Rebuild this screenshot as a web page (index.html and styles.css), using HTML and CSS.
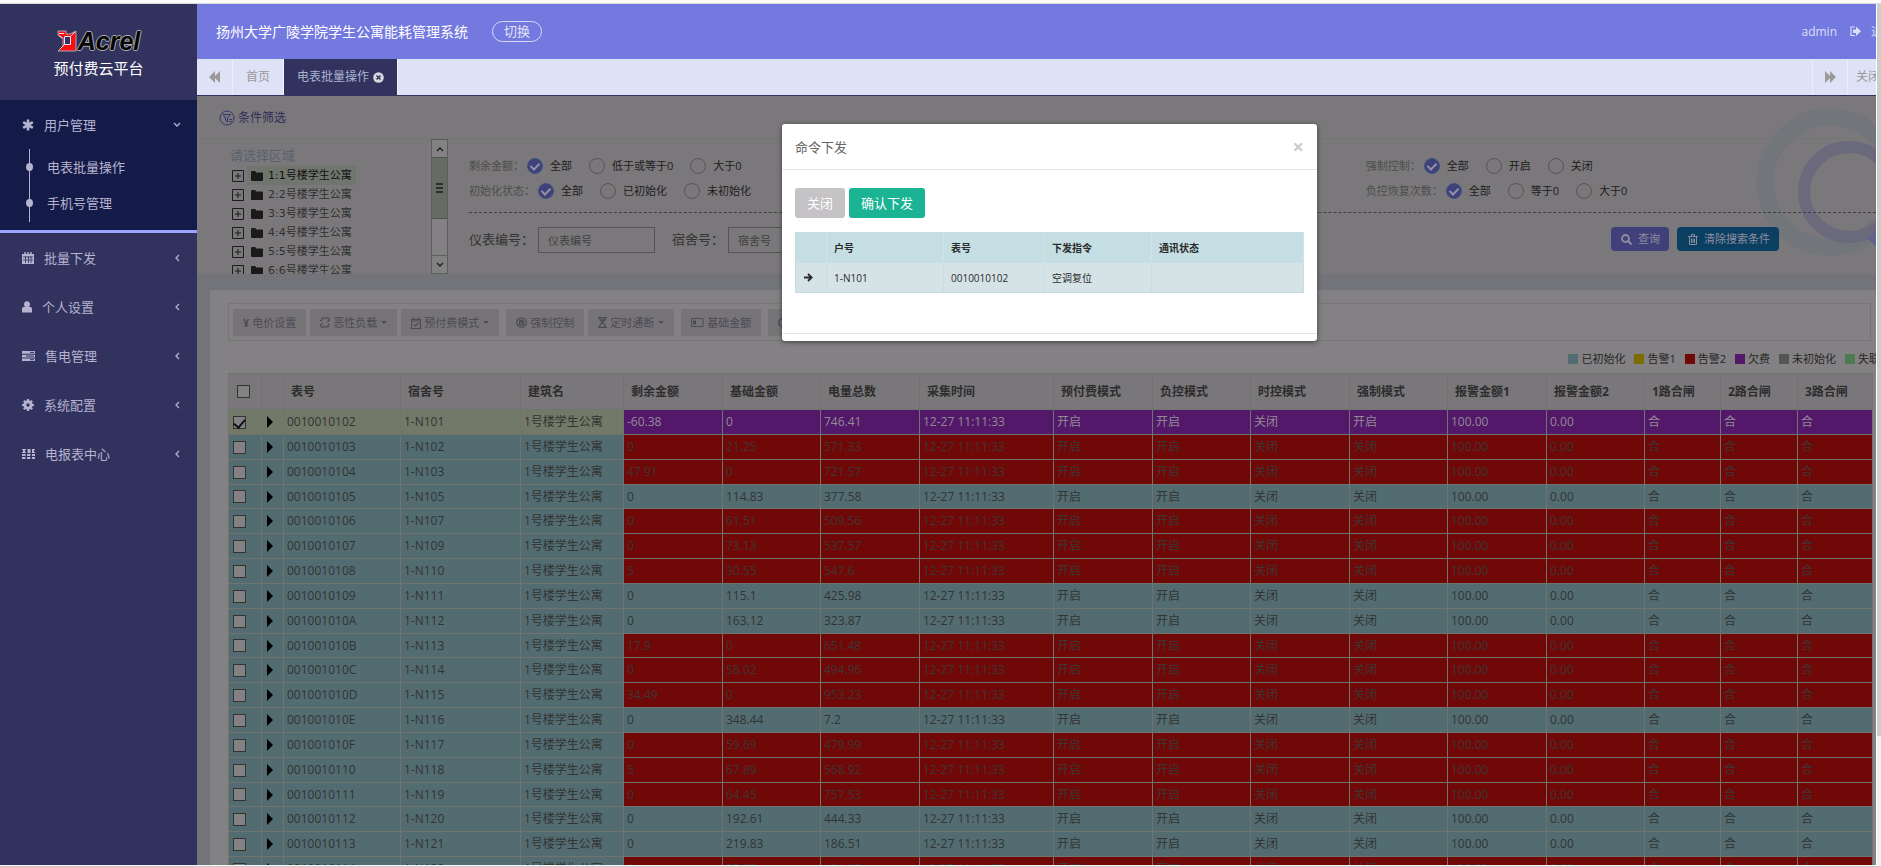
FILE: index.html
```html
<!DOCTYPE html>
<html lang="zh-CN">
<head>
<meta charset="utf-8">
<title>预付费云平台</title>
<link rel="stylesheet" href="styles.css">
</head>
<body>
<div class="strip"></div>
<div class="app">
  <aside class="sidebar">
    <div class="brand">
      <div class="logo">
        <svg width="20" height="22" viewBox="0 0 20 22"><path d="M1 1h8v3h4l6-3v20H1l5-5V8L1 5z" fill="#f81010" stroke="#aaa6b4"/><path d="M2 3.500h5M1.500 5.500l4 3" stroke="#e6e1ee" fill="none"/><path d="M7.500 6.500h6v8h-6z" fill="#32325f" stroke="#e6e1ee"/><path d="M13.500 6.500L18 2M7.500 14.500L3 19" stroke="#e6e1ee"/></svg>
        <span class="logo-text">Acrel</span>
      </div>
      <div class="brand-name">预付费云平台</div>
    </div>
    <nav>
      <div class="group open">
        <a class="item" href="#">
          <svg class="ico" viewBox="0 0 12 12"><path d="M6 .5v11M1.200 3.200l9.600 5.600M10.800 3.200l-9.600 5.600" stroke="currentColor" stroke-width="2.600"/></svg>
          <span>用户管理</span>
          <svg class="arrow" viewBox="0 0 8 8"><path d="M1 2l3 3 3-3" stroke="currentColor" stroke-width="1.300" fill="none"/></svg>
        </a>
        <ul class="sub">
          <li><a href="#">电表批量操作</a></li>
          <li><a href="#">手机号管理</a></li>
        </ul>
      </div>
      <a class="item" href="#">
        <svg class="ico" viewBox="0 0 12 12"><path d="M0 2h12v10H0z" fill="currentColor"/><path d="M3 0v3M6 0v3M9 0v3" stroke="currentColor" stroke-width="1.500"/><path d="M1 5h10M1 8h10M3.500 4v7M6.500 4v7M9 4v7" stroke="#32325f" stroke-width=".8"/></svg>
        <span>批量下发</span>
        <svg class="arrow" viewBox="0 0 8 8"><path d="M6 1L3 4l3 3" stroke="currentColor" stroke-width="1.300" fill="none"/></svg>
      </a>
      <a class="item" href="#">
        <svg class="ico narrow" viewBox="0 0 10 12"><circle cx="5" cy="3.200" r="2.900" fill="currentColor"/><path d="M0 11.500V8c0-2 2-2.500 3-2h4c1-.5 3 0 3 2v3.500z" fill="currentColor"/></svg>
        <span>个人设置</span>
        <svg class="arrow" viewBox="0 0 8 8"><path d="M6 1L3 4l3 3" stroke="currentColor" stroke-width="1.300" fill="none"/></svg>
      </a>
      <a class="item" href="#">
        <svg class="ico wide" viewBox="0 0 13 12"><path d="M0 1h13v2.800H0zM0 4.800h13v2.600H0zM0 8.400h13V11H0z" fill="currentColor"/><path d="M8 2.400h4M4 6.100h8M8 9.700h4" stroke="#32325f"/></svg>
        <span>售电管理</span>
        <svg class="arrow" viewBox="0 0 8 8"><path d="M6 1L3 4l3 3" stroke="currentColor" stroke-width="1.300" fill="none"/></svg>
      </a>
      <a class="item" href="#">
        <svg class="ico" viewBox="0 0 12 12"><circle cx="6" cy="6" r="3.200" fill="none" stroke="currentColor" stroke-width="3"/><path d="M6 0v2M6 10v2M0 6h2M10 6h2M1.800 1.800l1.500 1.500M8.700 8.700l1.500 1.500M1.800 10.200l1.500-1.500M8.700 3.300l1.500-1.500" stroke="currentColor" stroke-width="2.200"/></svg>
        <span>系统配置</span>
        <svg class="arrow" viewBox="0 0 8 8"><path d="M6 1L3 4l3 3" stroke="currentColor" stroke-width="1.300" fill="none"/></svg>
      </a>
      <a class="item" href="#">
        <svg class="ico wide" viewBox="0 0 13 12"><path d="M0 1h4v1H3v2h1v1H0V4h1V2H0zM5.500 1h3v4h-3zM10 1h3v1h-1v2h1v1h-3zM0 6h3.500v2H0zM5 6h3.500v2H5zM10 6h3v2h-3zM0 9h3.500v2H0zM5 9h3.500v2H5zM10 9h3v2h-3z" fill="currentColor"/></svg>
        <span>电报表中心</span>
        <svg class="arrow" viewBox="0 0 8 8"><path d="M6 1L3 4l3 3" stroke="currentColor" stroke-width="1.300" fill="none"/></svg>
      </a>
    </nav>
  </aside>

  <div class="main">
    <header class="topbar">
      <h1>扬州大学广陵学院学生公寓能耗管理系统</h1>
      <button class="switch" type="button">切换</button>
      <span class="user">admin</span>
      <a class="logout" href="#"><svg width="11" height="11" viewBox="0 0 11 11"><path d="M5 1H1v8.500h4" fill="none" stroke="currentColor" stroke-width="1.200"/><path d="M3 3.500h3V.5l5 4.800-5 4.700V7H3z" fill="currentColor"/></svg><span>退出</span></a>
    </header>
    <div class="tabs">
      <button class="tab-nav" type="button" aria-label="向左"><svg width="12" height="12" viewBox="0 0 12 12"><path d="M6 0v12L0 6zM11 0v12L5 6z" fill="currentColor"/></svg></button>
      <a class="tab" href="#">首页</a>
      <a class="tab active" href="#">电表批量操作<svg width="11" height="11" viewBox="0 0 11 11"><circle cx="5.500" cy="5.500" r="5.300" fill="#d8d8dc"/><path d="M3.500 3.500l4 4M7.500 3.500l-4 4" stroke="#32325f" stroke-width="1.500"/></svg></a>
      <button class="tab-nav right" type="button" aria-label="向右"><svg width="12" height="12" viewBox="0 0 12 12"><path d="M1 0v12l6-6zM6 0v12l6-6z" fill="currentColor"/></svg></button>
      <button class="tab-close" type="button">关闭</button>
    </div>

    <div class="content">
      <section class="filter">
        <svg class="deco" width="130" height="150" viewBox="0 0 130 150"><circle cx="75" cy="74" r="65" fill="none" stroke="#72757a" stroke-width="17"/><circle cx="94" cy="84" r="45" fill="none" stroke="#6b697c" stroke-width="12"/><path d="M112 130l12-8v20z" fill="#62638a"/></svg>
        <div class="filter-head">
          <svg width="16" height="16" viewBox="0 0 16 16" fill="none" stroke="currentColor"><circle cx="8" cy="8" r="7"/><path d="M4 4.500h7.500L8.500 8v4l-2-1.500V8zM10 9.500h3M10 11.500h2.500"/></svg>
          <span>条件筛选</span>
        </div>
        <div class="filter-body">
          <div class="area">
            <div class="tree">
              <div class="tree-title">请选择区域</div>
              <ul id="tree"></ul>
            </div>
            <div class="scroll">
              <button type="button" aria-label="上"><svg width="8" height="8" viewBox="0 0 8 8"><path d="M1 6l3-3 3 3" stroke="currentColor" stroke-width="1.500" fill="none"/></svg></button>
              <div class="thumb"><i></i><i></i><i></i></div>
              <div class="track"></div>
              <button type="button" aria-label="下"><svg width="8" height="8" viewBox="0 0 8 8"><path d="M1 2l3 3 3-3" stroke="currentColor" stroke-width="1.500" fill="none"/></svg></button>
            </div>
          </div>
          <form class="form">
            <div class="radios">
              <fieldset><legend>剩余金额：</legend>
                <label><input type="radio" name="a" checked>全部</label><label><input type="radio" name="a">低于或等于0</label><label><input type="radio" name="a">大于0</label></fieldset>
              <fieldset class="third"><legend>强制控制：</legend>
                <label><input type="radio" name="b" checked>全部</label><label><input type="radio" name="b">开启</label><label><input type="radio" name="b">关闭</label></fieldset>
              <fieldset><legend>初始化状态：</legend>
                <label><input type="radio" name="c" checked>全部</label><label><input type="radio" name="c">已初始化</label><label><input type="radio" name="c">未初始化</label></fieldset>
              <fieldset class="third"><legend>负控恢复次数：</legend>
                <label><input type="radio" name="d" checked>全部</label><label><input type="radio" name="d">等于0</label><label><input type="radio" name="d">大于0</label></fieldset>
            </div>
            <div class="query">
              <label for="meter">仪表编号：</label><input id="meter" type="text" placeholder="仪表编号">
              <label for="room">宿舍号：</label><input id="room" type="text" placeholder="宿舍号">
              <button class="search" type="button"><svg width="11" height="11" viewBox="0 0 11 11"><circle cx="4.500" cy="4.500" r="3.500" fill="none" stroke="currentColor" stroke-width="1.800"/><path d="M7 7l3.500 3.500" stroke="currentColor" stroke-width="2"/></svg>查询</button>
              <button class="clear" type="button"><svg width="10" height="11" viewBox="0 0 10 11" fill="none" stroke="currentColor"><path d="M0 2.500h10M3.500 2V.5h3V2M1.500 3v7.500h7V3M3.500 4.500V9M5 4.500V9M6.500 4.500V9"/></svg>清除搜索条件</button>
            </div>
          </form>
        </div>
      </section>

      <section class="card">
        <div class="toolbar">
          <button type="button"><b>¥</b>电价设置</button>
          <button type="button"><svg width="10" height="11" viewBox="0 0 10 11" fill="none" stroke="currentColor" stroke-width="1.200"><path d="M5 2l1-1c2-1 4 1 3 2.500L7.500 5M5 9l-1 1c-2 1-4-1-3-2.500L2.500 6M3.500 0v2M0 3.500h2M1 1l1.500 1.500M6.500 11V9M10 7.500H8M9 10L7.500 8.500"/></svg>恶性负载<i class="caret"></i></button>
          <button class="group-end" type="button"><svg width="10" height="12" viewBox="0 0 10 12" fill="none" stroke="currentColor"><path d="M.5 2.500h9v9h-9zM.5 4h9M2.500 0v3M7.500 0v3M3 7.500l1.500 1.500L7.500 6" stroke-width="1.200"/></svg>预付费模式<i class="caret"></i></button>
          <button type="button"><svg width="11" height="11" viewBox="0 0 11 11" fill="none" stroke="currentColor" stroke-width="1.300"><circle cx="5.500" cy="5.500" r="4.700"/><path d="M4 5V3.500h3V5M3.500 5h4v2.500h-4z"/></svg>强制控制</button>
          <button class="group-end" type="button"><svg width="9" height="11" viewBox="0 0 9 11" fill="none" stroke="currentColor"><path d="M0 .7h9M0 10.300h9M1.500 1c0 3 2 3.500 3 4.500-1 1-3 1.500-3 4.500M7.500 1c0 3-2 3.500-3 4.500 1 1 3 1.500 3 4.500M2.500 3h4" stroke-width="1.300"/></svg>定时通断<i class="caret"></i></button>
          <button class="group-end" type="button"><svg width="13" height="9" viewBox="0 0 13 9"><path d="M.5 .5h11.500v8H.5z" fill="none" stroke="currentColor"/><path d="M2 2.500h3v4H2z" fill="currentColor"/></svg>基础金额</button>
          <button type="button"><svg width="10" height="11" viewBox="0 0 10 11" fill="none" stroke="currentColor" stroke-width="1.400"><circle cx="5" cy="5.500" r="4.200"/></svg>空调复位</button>
        </div>
        <ul class="legend">
          <li><i class="c-init"></i>已初始化</li><li><i class="c-warn1"></i>告警1</li><li><i class="c-warn2"></i>告警2</li><li><i class="c-debt"></i>欠费</li><li><i class="c-none"></i>未初始化</li><li><i class="c-lost"></i>失联</li>
        </ul>
        <table class="grid">
          <colgroup id="cols"></colgroup>
          <thead><tr id="head"></tr></thead>
          <tbody id="rows"></tbody>
        </table>
      </section>

      <div class="modal" role="dialog" aria-labelledby="modal-title">
        <div class="modal-head"><h2 id="modal-title">命令下发</h2><button type="button" aria-label="关闭窗口">×</button></div>
        <div class="modal-body">
          <div class="modal-actions"><button class="cancel" type="button">关闭</button><button class="confirm" type="button">确认下发</button></div>
          <table class="orders">
            <colgroup><col class="w-mark"><col class="w-house"><col class="w-meter"><col class="w-cmd"><col></colgroup>
            <thead><tr><th></th><th>户号</th><th>表号</th><th>下发指令</th><th>通讯状态</th></tr></thead>
            <tbody><tr><td><svg width="9" height="9" viewBox="0 0 9 9"><path d="M0 4.500h7M4 1l3.700 3.500L4 8" stroke="currentColor" stroke-width="1.900" fill="none"/></svg></td><td>1-N101</td><td>0010010102</td><td>空调复位</td><td></td></tr></tbody>
          </table>
        </div>
        <div class="modal-foot"></div>
      </div>
    </div>
  </div>
  <div class="page-scroll"><div class="page-thumb"></div></div>
</div>
<div class="bottom-edge"></div>
<script src="app.js"></script>
</body>
</html>
```
FILE: styles.css
```css
* { box-sizing: border-box; }
body {
  margin: 0;
  height: 100vh;
  display: flex;
  flex-direction: column;
  overflow: hidden;
  background: #fff;
  color: #333;
  font: 12px/16px "Open Sans", "Noto Sans CJK SC", sans-serif;
}
button, input { font: inherit; color: inherit; margin: 0; }
button { border: 0; padding: 0; background: none; }
a { color: inherit; text-decoration: none; }
ul { list-style: none; margin: 0; padding: 0; }
h1, h2 { margin: 0; font-weight: 400; }
svg { flex: none; }

.strip { height: 4px; flex: none; background: #fbfbfb; border-bottom: 1px solid #dcdcdc; }
.bottom-edge { height: 2px; flex: none; background: #c9c9c9; border-top: 1px solid #f6f6f6; }
.app { flex: 1; min-height: 0; display: flex; }

/* sidebar */
.sidebar { width: 197px; flex: none; background: #32325f; color: #b5b3cf; overflow: hidden; }
.brand { height: 96px; padding-top: 25px; color: #fff; text-align: center; }
.logo { display: flex; justify-content: center; align-items: center; gap: 1px; height: 24px; margin-bottom: 4px; }
.logo-text {
  font: italic bold 25px/24px "Liberation Sans", sans-serif;
  color: #050505;
  text-shadow: 1px 0 #aaa, -1px 0 #aaa, 0 1px #aaa, 0 -1px #aaa;
}
.brand-name { font-size: 15px; line-height: 22px; }
.item { display: flex; align-items: center; height: 49px; padding: 0 16px 0 22px; font-size: 13px; }
.ico { width: 12px; height: 12px; margin-right: 10px; }
.ico.narrow { width: 10px; }
.ico.wide { width: 13px; }
.arrow { width: 8px; height: 8px; margin-left: auto; }
.open { background: #151b48; border-bottom: 3px solid #9aa5fb; height: 133px; }
.sub { position: relative; margin-left: 29px; border-left: 1px solid #b5b3cf; height: 73px; font-size: 13px; }
.sub li { display: flex; align-items: center; height: 36px; }
.sub li::before { content: ""; width: 7px; height: 8px; border-radius: 50%; background: #b5b3cf; margin-left: -4px; margin-right: 14px; }

/* header */
.main { flex: 1; min-width: 0; display: flex; flex-direction: column; overflow: hidden; }
.topbar { display: flex; align-items: center; flex: none; height: 55px; padding-left: 19px; background: #7379df; color: #fff; }
.topbar h1 { font-size: 14px; line-height: 20px; }
.switch { margin-left: 24px; width: 50px; height: 21px; border: 1px solid #d9dbf7; border-radius: 11px; color: #e3e4fa; font-size: 13px; line-height: 19px; }
.user { margin-left: auto; color: #dcdef6; }
.logout { display: flex; align-items: center; gap: 10px; width: 26px; margin-left: 13px; overflow: hidden; white-space: nowrap; color: #dcdef6; }
.tabs { display: flex; flex: none; height: 37px; background: #dee2f7; border-bottom: 1px solid #32325f; color: #999; }
.tab-nav { width: 36px; border-right: 1px solid #eee; display: flex; align-items: center; justify-content: center; }
.tab { display: flex; align-items: center; gap: 4px; padding: 0 13px; border-right: 1px solid #f4f4f8; }
.tab.active { padding: 0 13px; background: #32325f; color: #a9b4cf; }
.tab-nav.right { margin-left: auto; border-left: 1px solid #eee; }
.tab-close { width: 28px; padding-left: 8px; overflow: hidden; white-space: nowrap; text-align: left; }

/* shaded page */
.content { position: relative; flex: 1; min-height: 0; display: flex; flex-direction: column; overflow: hidden; background: #727479; }
.filter { position: relative; flex: none; height: 178px; background: #7b787b; overflow: hidden; }
.deco { position: absolute; right: -9px; top: 12px; }
.filter-head { position: relative; display: flex; align-items: center; gap: 3px; height: 43px; padding: 1px 0 0 22px; border-bottom: 1px solid #737673; color: #2c2d56; }
.filter-head svg { color: #34366f; }
.filter-body { position: relative; display: flex; height: 135px; }
.area { display: flex; width: 251px; flex: none; }
.tree { flex: 1; padding: 7px 0 0 35px; overflow: hidden; font: 11px/19px "DejaVu Sans", "Noto Sans CJK SC", sans-serif; color: #2f2f2f; }
.tree-title { font-size: 13px; line-height: 20px; margin-left: -2px; color: #58626d; }
.tree li { display: flex; align-items: center; height: 19px; }
.tree label { display: flex; align-items: center; height: 19px; margin-left: 3px; padding: 0 4px; gap: 5px; }
.tree .on { background: #70756d; color: #111; }
.tree svg { flex: none; }
.scroll { width: 17px; display: flex; flex-direction: column; background: #838183; border: 1px solid #5b5f5a; color: #222; }
.scroll button { height: 17px; display: flex; align-items: center; justify-content: center; }
.thumb { height: 62px; border-top: 1px solid #4d524c; border-bottom: 1px solid #4d524c; background: #666b64; display: flex; flex-direction: column; align-items: center; justify-content: center; gap: 2px; }
.thumb i { width: 7px; height: 2px; background: #2d2f2d; }
.track { flex: 1; border-bottom: 1px solid #5b5f5a; }

.form { flex: 1; min-width: 0; padding: 15px 0 0 21px; font-size: 11px; }
.radios { display: grid; grid-template-columns: repeat(3, 1fr); row-gap: 1px; padding: 0 62px 9px 0; border-bottom: 1px dashed #3f3f3f; }
fieldset { display: flex; align-items: center; margin: 0; padding: 0; border: 0; height: 24px; gap: 17px; white-space: nowrap; color: #1d1d1d; }
.radios legend { float: left; padding: 0; margin-right: -14px; color: #4b4d4b; }
.third { grid-column: 3; }
fieldset label { display: flex; align-items: center; gap: 7px; }
input[type="radio"] { appearance: none; width: 16px; height: 16px; border: 1px solid #565656; border-radius: 50%; display: flex; justify-content: center; }
input[type="radio"]:checked { background: #40417a; border-color: #3a5480; }
input[type="radio"]:checked::after { content: ""; width: 4px; height: 7px; margin-top: 2px; border: solid #9492a8; border-width: 0 2px 2px 0; transform: rotate(45deg); }
.query { display: flex; align-items: flex-start; padding: 14px 97px 0 0; color: #333; }
.query label { font-size: 13px; line-height: 25px; margin-right: 4px; white-space: nowrap; }
.query input { width: 117px; height: 26px; margin-right: 17px; padding: 0 9px; border: 1px solid #545454; background: transparent; }
.query input::placeholder { color: #3f4240; }
.query button { display: flex; align-items: center; gap: 6px; height: 24px; border-radius: 4px; color: #8e8ca0; }
.search { width: 58px; margin-left: auto; padding-left: 10px; background: #40417a; }
.clear { width: 102px; margin-left: 8px; padding-left: 11px; background: #0b3f62; color: #8ea0ab; }

.card { flex: 1; min-height: 0; margin: 16px 0 0 13px; padding: 13px 5px 0 18px; background: #838183; }
.toolbar { display: flex; gap: 4px; height: 38px; padding: 5px 4px; border: 1px solid #767676; font-size: 11px; color: #4c4a55; white-space: nowrap; overflow: hidden; }
.toolbar button { display: flex; align-items: center; gap: 3px; padding: 0 10px; height: 27px; background: #777477; }
.toolbar .group-end { margin-right: 3px; }
.caret { width: 0; height: 0; margin-left: 1px; border: 3px solid transparent; border-top-color: currentColor; border-bottom: 0; }
.legend { display: flex; justify-content: flex-end; gap: 9px; height: 32px; padding-top: 10px; margin-right: -9px; font-size: 11px; color: #262626; white-space: nowrap; }
.legend li { display: flex; align-items: center; gap: 3px; height: 16px; }
.legend i { width: 10px; height: 10px; }
.c-init { background: #526c72; }
.c-warn1 { background: #7c6c00; }
.c-warn2 { background: #710808; }
.c-debt { background: #54186a; }
.c-none { background: #555; }
.c-lost { background: #4d7a50; }

.grid { width: 100%; table-layout: fixed; border-collapse: collapse; color: #323432; }
.grid th, .grid td { border: 1px solid #707370; padding: 0 0 0 3px; height: 25px; line-height: 16px; text-align: left; white-space: nowrap; overflow: hidden; }
.grid th { height: 36px; padding-left: 7px; background: #7a777a; color: #2d2d2d; }
.grid tbody tr { background: #526c72; }
.grid tbody tr:nth-child(6n+4) td { height: 24px; }
.grid .red td:nth-child(n+6) { background: #710808; color: #3c3634; }
.grid tbody .picked { background: #727968; }
.grid .picked td:nth-child(n+6) { background: #54186a; color: #918c94; }
.grid svg, .grid input { display: block; }
.grid svg { margin-left: 2px; fill: #000; }
.grid input { appearance: none; width: 13px; height: 13px; margin-left: 1px; border: 1px solid #333; background: #838183; display: flex; justify-content: center; }
.grid input:checked::after { content: ""; width: 5px; height: 9px; border: solid #111; border-width: 0 2px 2px 0; transform: rotate(40deg); }

/* dialog */
.modal { position: absolute; left: 585px; top: 28px; width: 535px; background: #fff; border-radius: 3px; box-shadow: 0 1px 5px #3f3f3f; }
.modal-head { display: flex; align-items: center; justify-content: space-between; height: 46px; padding: 0 13px; border-bottom: 1px solid #e5e5e5; color: #666; }
.modal-head h2 { font-size: 13px; }
.modal-head button { font-size: 20px; font-weight: 700; color: #ccc; }
.modal-body { padding: 18px 13px 40px; }
.modal-actions { display: flex; gap: 4px; margin-bottom: 14px; color: #fff; font-size: 13px; }
.modal-actions button { height: 30px; border-radius: 3px; padding: 0 12px; }
.cancel { background: #c5c3c6; }
.confirm { background: #1ab394; }
.orders { width: 100%; table-layout: fixed; border-collapse: collapse; font-size: 10px; color: #2b2b2b; background: #d6e3e6; }
.orders th, .orders td { height: 30px; padding: 0 7px; text-align: left; border: 1px solid #c5dee4; }
.orders th { background: #c5dee4; border-right-color: #d6e3e6; }
.orders svg { display: block; margin-left: 1px; }
.w-mark { width: 31px; }
.w-house { width: 117px; }
.w-meter { width: 101px; }
.w-cmd { width: 107px; }
.modal-foot { height: 8px; border-top: 1px solid #e5e5e5; }

.page-scroll { width: 5px; flex: none; border-left: 1px solid #fff; background: #f0f0f0; }
.page-thumb { height: 85%; background: #cdcdcd; }
```
FILE: app.js
```js
const columns = [
  ['', 33], ['', 22], ['表号', 117], ['宿舍号', 120], ['建筑名', 103], ['剩余金额', 99],
  ['基础金额', 98], ['电量总数', 99], ['采集时间', 134], ['预付费模式', 99], ['负控模式', 98],
  ['时控模式', 99], ['强制模式', 98], ['报警金额1', 99], ['报警金额2', 98], ['1路合闸', 76],
  ['2路合闸', 77], ['3路合闸', 75]
];

/* meter, room, balance, base amount, total energy, state */
const meters = [
  ['0010010102', '1-N101', '-60.38', '0', '746.41', 'picked'],
  ['0010010103', '1-N102', '0', '21.25', '571.33', 'red'],
  ['0010010104', '1-N103', '47.91', '0', '721.57', 'red'],
  ['0010010105', '1-N105', '0', '114.83', '377.58', ''],
  ['0010010106', '1-N107', '0', '61.51', '509.56', 'red'],
  ['0010010107', '1-N109', '0', '73.13', '537.57', 'red'],
  ['0010010108', '1-N110', '5', '30.55', '547.6', 'red'],
  ['0010010109', '1-N111', '0', '115.1', '425.98', ''],
  ['001001010A', '1-N112', '0', '163.12', '323.87', ''],
  ['001001010B', '1-N113', '17.9', '0', '651.48', 'red'],
  ['001001010C', '1-N114', '0', '58.02', '494.96', 'red'],
  ['001001010D', '1-N115', '34.49', '0', '953.23', 'red'],
  ['001001010E', '1-N116', '0', '348.44', '7.2', ''],
  ['001001010F', '1-N117', '0', '59.69', '479.99', 'red'],
  ['0010010110', '1-N118', '5', '67.89', '568.92', 'red'],
  ['0010010111', '1-N119', '0', '64.45', '757.53', 'red'],
  ['0010010112', '1-N120', '0', '192.61', '444.33', ''],
  ['0010010113', '1-N121', '0', '219.83', '186.51', ''],
  ['0010010114', '1-N122', '0', '85.85', '491.99', 'red']
];

const triangle = '<svg width="6" height="12" viewBox="0 0 6 12"><path d="M0 0l6 6-6 6z"/></svg>';

document.getElementById('cols').innerHTML =
  columns.map(c => `<col style="width:${c[1]}px">`).join('');
document.getElementById('head').innerHTML =
  columns.map((c, i) => `<th>${i === 0 ? '<input type="checkbox" aria-label="全选">' : c[0]}</th>`).join('');
document.getElementById('rows').innerHTML = meters.map(m => {
  const picked = m[5] === 'picked';
  const cells = [
    `<input type="checkbox" aria-label="${m[0]}"${picked ? ' checked' : ''}>`, triangle,
    m[0], m[1], '1号楼学生公寓', m[2], m[3], m[4], '12-27 11:11:33', '开启', '开启', '关闭',
    picked ? '开启' : '关闭', '100.00', '0.00', '合', '合', '合'
  ];
  return `<tr class="${m[5]}">${cells.map(c => `<td>${c}</td>`).join('')}</tr>`;
}).join('');

const plus = '<svg width="12" height="12" viewBox="0 0 12 12"><path d="M.5 .5h11v11H.5zM3 6h6M6 3v6" fill="none" stroke="#1c1c1c"/></svg>';
const folder = '<svg width="12" height="10" viewBox="0 0 12 10"><path d="M0 1q0-1 1-1h3q1 0 1 1.500h6q1 0 1 1V9q0 1-1 1H1q-1 0-1-1z" fill="#1a1a1a"/></svg>';
document.getElementById('tree').innerHTML = [1, 2, 3, 4, 5, 6].map(n =>
  `<li>${plus}<label class="${n === 1 ? 'on' : ''}">${folder}${n}:${n}号楼学生公寓</label></li>`).join('');
```
